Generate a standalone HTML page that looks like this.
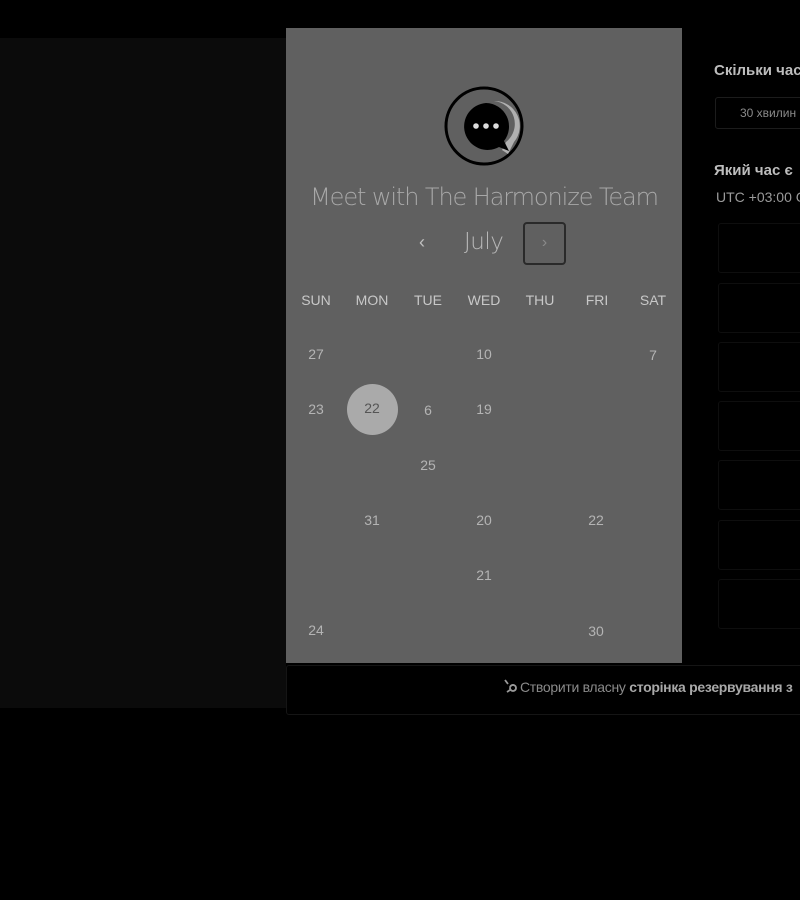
<!DOCTYPE html>
<html><head><meta charset="utf-8"><style>
*{margin:0;padding:0;box-sizing:border-box}
body{width:800px;height:900px;background:#000;position:relative;overflow:hidden;font-family:"Liberation Sans","DejaVu Sans",sans-serif}
.abs{position:absolute}
.leftbg{left:0;top:38px;width:286px;height:670px;background:#0b0b0b}
.cal{left:286px;top:28px;width:396px;height:635px;background:#606060}
.title{left:286px;width:396px;top:183px;text-align:center;color:#a8a8a8;font-size:24px;font-family:"DejaVu Sans","Liberation Sans",sans-serif;font-weight:300;letter-spacing:-1.1px}
.dow{top:292px;font-size:14px;color:#c8c8c8;width:60px;text-align:center;margin-left:-30px}
.d{font-size:14px;color:#b4b4b4;width:40px;text-align:center;margin-left:-20px}
.slot{left:718px;width:100px;height:50px;border:1px solid #0e0e0e;border-radius:3px}
</style></head><body>
<div class="abs leftbg"></div>
<div class="abs cal"></div>
<svg class="abs" style="left:440px;top:82px" width="90" height="90" viewBox="440 82 90 90">
<circle cx="484" cy="126" r="38" fill="none" stroke="#000" stroke-width="3"/>
<path d="M494 101 A25 25 0 0 1 514 142 L508 154 L502 150 L506 142 A23 23 0 0 0 494 101Z" fill="#b0b0b0"/>
<path d="M486 103 A23.5 23.5 0 1 0 499 147 L509 151 L504 141 A23.5 23.5 0 0 0 486 103Z" fill="#000"/>
<circle cx="476" cy="126" r="2.8" fill="#ddd"/><circle cx="486" cy="126" r="2.8" fill="#ddd"/><circle cx="496" cy="126" r="2.8" fill="#ddd"/>
</svg>
<div class="abs title">Meet with The Harmonize Team</div>
<div class="abs" style="left:419px;top:232px;color:#c0c0c0;font-size:18px">‹</div>
<div class="abs" style="left:464px;top:229px;color:#b8b8b8;font-size:23px;font-family:'DejaVu Sans',sans-serif;font-weight:300;letter-spacing:-0.5px">July</div>
<div class="abs" style="left:523px;top:222px;width:43px;height:43px;border:2px solid #2a2a2a;border-radius:4px;color:#8a8a8a;font-size:16px;text-align:center;line-height:38px">›</div>
<div class="abs dow" style="left:316px">SUN</div>
<div class="abs dow" style="left:372px">MON</div>
<div class="abs dow" style="left:428px">TUE</div>
<div class="abs dow" style="left:484px">WED</div>
<div class="abs dow" style="left:540px">THU</div>
<div class="abs dow" style="left:597px">FRI</div>
<div class="abs dow" style="left:653px">SAT</div>
<div class="abs" style="left:347px;top:384px;width:51px;height:51px;border-radius:50%;background:#aaa"></div>
<div class="abs d" style="left:316px;top:346px">27</div>
<div class="abs d" style="left:484px;top:346px">10</div>
<div class="abs d" style="left:653px;top:347px">7</div>
<div class="abs d" style="left:316px;top:401px">23</div>
<div class="abs d" style="left:372px;top:400px;color:#555">22</div>
<div class="abs d" style="left:428px;top:402px">6</div>
<div class="abs d" style="left:484px;top:401px">19</div>
<div class="abs d" style="left:428px;top:457px">25</div>
<div class="abs d" style="left:372px;top:512px">31</div>
<div class="abs d" style="left:484px;top:512px">20</div>
<div class="abs d" style="left:596px;top:512px">22</div>
<div class="abs d" style="left:484px;top:567px">21</div>
<div class="abs d" style="left:316px;top:622px">24</div>
<div class="abs d" style="left:596px;top:623px">30</div>
<div class="abs" style="left:714px;top:62px;color:#bdbdbd;font-size:15px;font-weight:bold;white-space:nowrap">Скільки часу</div>
<div class="abs" style="left:715px;top:97px;width:120px;height:32px;border:1px solid #1c1c1c;border-radius:3px;color:#8a8a8a;font-size:12px;padding:8px 0 0 24px;white-space:nowrap">30 хвилин</div>
<div class="abs" style="left:714px;top:162px;color:#bdbdbd;font-size:15px;font-weight:bold;white-space:nowrap">Який час є</div>
<div class="abs" style="left:716px;top:189px;color:#9a9a9a;font-size:14px;white-space:nowrap">UTC +03:00 G</div>
<div class="abs slot" style="top:223px"></div>
<div class="abs slot" style="top:283px"></div>
<div class="abs slot" style="top:342px"></div>
<div class="abs slot" style="top:401px"></div>
<div class="abs slot" style="top:460px"></div>
<div class="abs slot" style="top:520px"></div>
<div class="abs slot" style="top:579px"></div>
<div class="abs" style="left:286px;top:665px;width:530px;height:50px;border:1px solid #151515;border-radius:3px;background:#000"></div>
<svg class="abs" style="left:503px;top:679px" width="14" height="16" viewBox="0 0 14 16"><path d="M2 1 L5 5 M7 9 A3 3 0 1 0 7 8.9 M4 13 L7 11" stroke="#9a9a9a" stroke-width="1.8" fill="none"/></svg>
<div class="abs" style="left:520px;top:679px;color:#8a8a8a;font-size:14px;white-space:nowrap;letter-spacing:-0.3px">Створити власну <b style="color:#a8a8a8">сторінка резервування з</b></div>
</body></html>
